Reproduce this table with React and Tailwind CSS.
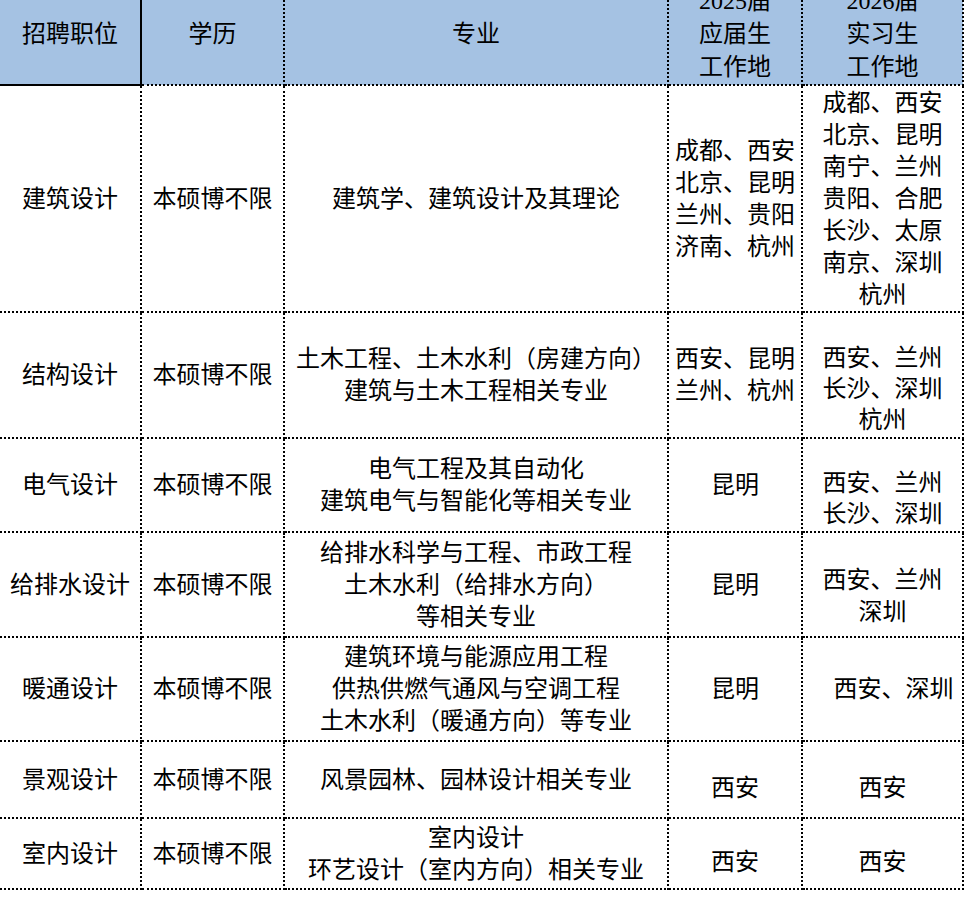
import React from "react";

const rows = [
  {
    pos: "建筑设计",
    major: ["建筑学、建筑设计及其理论"],
    grad: ["成都、西安", "北京、昆明", "兰州、贵阳", "济南、杭州"],
    intern: ["成都、西安", "北京、昆明", "南宁、兰州", "贵阳、合肥", "长沙、太原", "南京、深圳", "杭州"],
    h: "h-[227px]",
  },
  {
    pos: "结构设计",
    major: ["土木工程、土木水利（房建方向）", "建筑与土木工程相关专业"],
    grad: ["西安、昆明", "兰州、杭州"],
    intern: ["西安、兰州", "长沙、深圳", "杭州"],
    internPad: "align-top pt-[30px] leading-[31px]",
    h: "h-[126px]",
  },
  {
    pos: "电气设计",
    major: ["电气工程及其自动化", "建筑电气与智能化等相关专业"],
    grad: ["昆明"],
    intern: ["西安、兰州", "长沙、深圳"],
    internPad: "align-top pt-[29px] leading-[31px]",
    h: "h-[94px]",
  },
  {
    pos: "给排水设计",
    major: ["给排水科学与工程、市政工程", "土木水利（给排水方向）", "等相关专业"],
    grad: ["昆明"],
    intern: ["西安、兰州", "深圳"],
    internPad: "align-top pt-[31px]",
    h: "h-[105px]",
  },
  {
    pos: "暖通设计",
    major: ["建筑环境与能源应用工程", "供热供燃气通风与空调工程", "土木水利（暖通方向）等专业"],
    grad: ["昆明"],
    intern: ["西安、深圳"],
    internPad: "pl-[22px]",
    h: "h-[104px]",
  },
  {
    pos: "景观设计",
    major: ["风景园林、园林设计相关专业"],
    grad: ["西安"],
    intern: ["西安"],
    low: true,
    internPad: "pt-[16px]",
    h: "h-[77px]",
  },
  {
    pos: "室内设计",
    major: ["室内设计", "环艺设计（室内方向）相关专业"],
    grad: ["西安"],
    intern: ["西安"],
    low: true,
    internPad: "pt-[16px]",
    h: "h-[71px]",
  },
];

const cell = "border-2 border-dotted border-black text-center align-middle p-0";

function Lines({ items }) {
  return items.map((t, i) => <div key={i}>{t}</div>);
}

export default function App() {
  return (
    <div
      className="w-[978px] h-[898px] overflow-hidden bg-white text-black text-[24px] leading-[32px]"
      style={{ fontFamily: '"Liberation Serif", "Noto Sans CJK SC", serif' }}
    >
      <table className="-mt-[15px] w-[963px] table-fixed border-collapse">
        <colgroup>
          <col className="w-[141px]" />
          <col className="w-[143px]" />
          <col className="w-[384px]" />
          <col className="w-[134px]" />
          <col className="w-[161px]" />
        </colgroup>
        <thead>
          <tr className="h-[98px] bg-[#a5c2e3] leading-[33px]">
            <th className="border-0 border-r-2 border-b-2 border-solid border-black p-0 font-normal">
              招聘职位
            </th>
            <th className={`${cell} border-t-0 font-normal`}>学历</th>
            <th className={`${cell} border-t-0 font-normal`}>专业</th>
            <th className={`${cell} border-t-0 font-normal`}>
              <div>2025届</div>
              <div>应届生</div>
              <div>工作地</div>
            </th>
            <th className={`${cell} border-t-0 font-normal`}>
              <div>2026届</div>
              <div>实习生</div>
              <div>工作地</div>
            </th>
          </tr>
        </thead>
        <tbody>
          {rows.map((r) => (
            <tr key={r.pos} className={r.h}>
              <td className={`${cell} border-l-0`}>{r.pos}</td>
              <td className={cell}>本硕博不限</td>
              <td className={cell}>
                <Lines items={r.major} />
              </td>
              <td className={`${cell} ${r.low ? "pt-[16px]" : ""}`}>
                <Lines items={r.grad} />
              </td>
              <td className={`${cell} ${r.internPad || ""}`}>
                <Lines items={r.intern} />
              </td>
            </tr>
          ))}
        </tbody>
      </table>
    </div>
  );
}
